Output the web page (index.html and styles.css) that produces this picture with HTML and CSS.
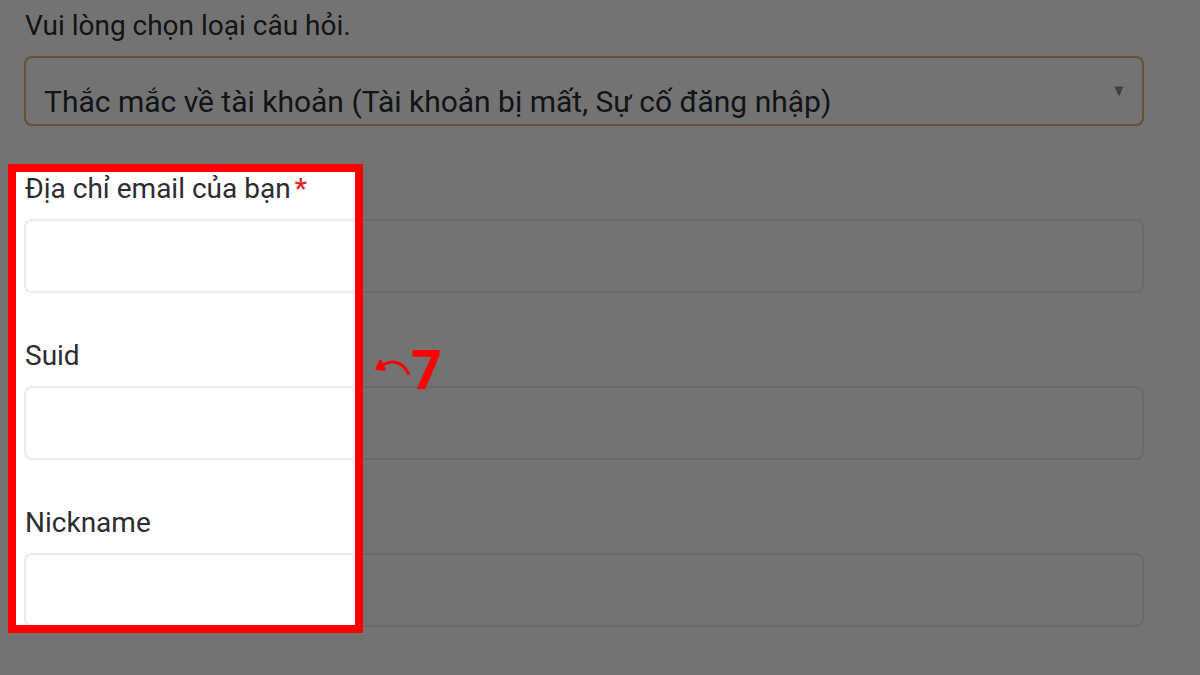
FILE: index.html
```
<!DOCTYPE html>
<html lang="vi">
<head>
  <meta charset="UTF-8" />
  <meta name="viewport" content="width=device-width, initial-scale=1" />
  <title>Gửi yêu cầu</title>
  <link rel="stylesheet" href="styles.css">
</head>
<body>
<form class="request-form">
  <div class="field">
    <label for="topic">Vui lòng chọn loại câu hỏi.</label>
    <div class="select-wrap">
      <select id="topic">
        <option>Thắc mắc về tài khoản (Tài khoản bị mất, Sự cố đăng nhập)</option>
      </select>
      <svg class="select-arrow" viewBox="0 0 10 10" aria-hidden="true">
        <path d="M0.5 0.5h9L5.5 9.5h-1z" />
      </svg>
    </div>
  </div>

  <div class="account-fields">
    <div class="field">
      <label for="email">Địa chỉ email của bạn<span class="required">*</span></label>
      <input type="email" id="email" required />
    </div>
    <div class="field">
      <label for="suid">Suid</label>
      <input type="text" id="suid" />
    </div>
    <div class="field">
      <label for="nickname">Nickname</label>
      <input type="text" id="nickname" />
    </div>

    <!-- red frame, everything outside of it is dimmed -->
    <div class="highlight"></div>
    <div class="step">
      <svg class="step-arrow" viewBox="0 0 36 24" aria-hidden="true">
        <path class="curve" d="M6 9.500C17 1.500 27 4.500 33.500 16.500" />
        <path class="head" d="M0.300 11.800L4.500 3Q5.500 2 6.500 3.500L10.700 12Q11 14 9 13.800L1.200 13Z" />
      </svg>
      <span class="step-number">7</span>
    </div>
  </div>
</form>
</body>
</html>
```
FILE: styles.css
```
* {
  box-sizing: border-box;
}

html, body {
  margin: 0;
  min-height: 100%;
  background: white;
}

body {
  min-height: 100vh;
  overflow-x: hidden;
  font-family: Roboto, sans-serif;
  color: #2c2d30;
}

/* form layout */
.request-form {
  display: flex;
  flex-direction: column;
  gap: 47px;
  padding: 10px 56px 47px 24px;
}

.account-fields {
  position: relative;
  display: flex;
  flex-direction: column;
  gap: 47px;
}

.field {
  display: flex;
  flex-direction: column;
  gap: 14px;
}

label {
  font-size: 28px;
  line-height: 32px;
  padding-left: 1px;
}

.required {
  color: #e02020;
  font-weight: 500;
  margin-left: 4px;
}

input,
select {
  display: block;
  width: 100%;
  font-family: inherit;
  font-size: 30px;
  color: inherit;
  background: white;
  border: 2px solid #ebebeb;
  border-radius: 8px;
  outline: none;
}

input {
  height: 74px;
  padding: 0 18px;
}

/* drop-down */
.select-wrap {
  display: grid;
  align-items: center;
}

.select-wrap > * {
  grid-area: 1 / 1;
}

select {
  appearance: none;
  height: 70px;
  padding: 20px 48px 0 18px;
  border-color: #e0b474;
}

.select-arrow {
  justify-self: end;
  width: 10px;
  height: 10px;
  margin-right: 20px;
  fill: #8c8c8c;
  pointer-events: none;
}

/* step marker */
.highlight {
  position: absolute;
  top: -9px;
  left: -16px;
  width: 355px;
  bottom: -6px;
  border: 8px solid #ff0000;
  box-shadow: 0 0 0 100vmax rgba(0, 0, 0, 0.55);
  pointer-events: none;
}

.step {
  position: absolute;
  top: 169px;
  left: 351px;
  display: flex;
  align-items: center;
  color: #ff0000;
}

.step-arrow {
  width: 36px;
  height: 24px;
}

.step-arrow .curve {
  fill: none;
  stroke: currentColor;
  stroke-width: 3;
  stroke-linecap: round;
}

.step-arrow .head {
  fill: currentColor;
}

.step-number {
  font-family: "Open Sans", sans-serif;
  font-size: 53px;
  font-weight: 700;
  line-height: 53px;
}
```
